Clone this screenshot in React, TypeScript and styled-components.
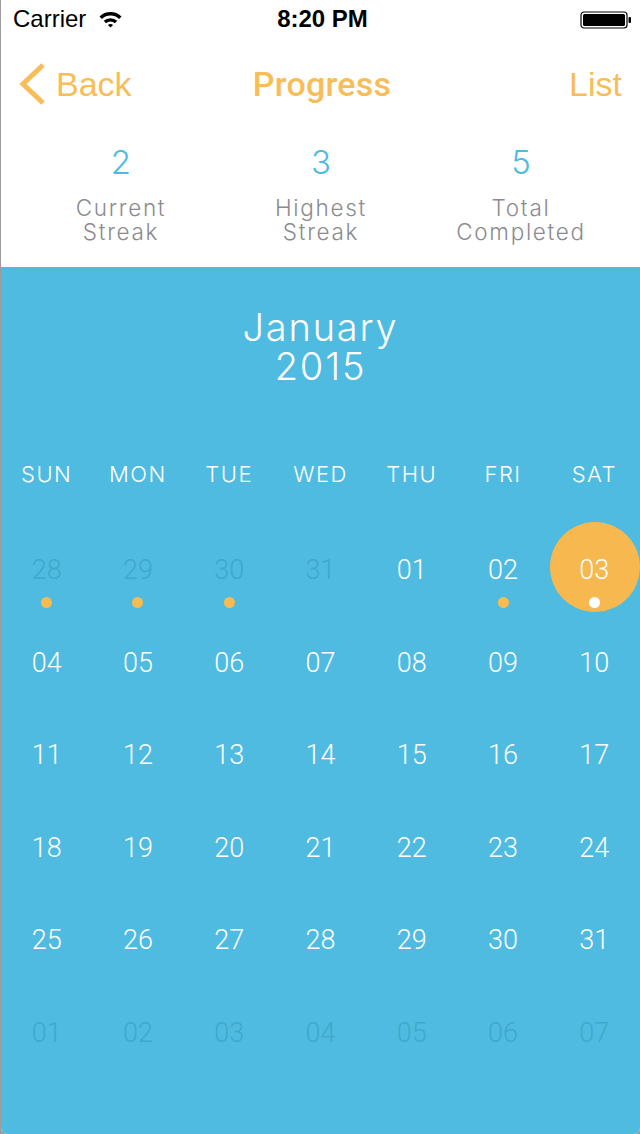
import React from "react";
import styled, { createGlobalStyle } from "styled-components";

const GlobalStyle = createGlobalStyle`
  html, body {
    margin: 0;
    padding: 0;
    background: #9c9c9c;
  }
  #root {
    min-height: 1134px;
  }
`;

const ORANGE = "#f8bd59";
const BLUE = "#4fbbe0";

const Phone = styled.div`
  margin-left: 1px;
  min-height: 1134px;
  background: #ffffff;
  display: flex;
  flex-direction: column;
  border-bottom-left-radius: 6px;
  border-bottom-right-radius: 6px;
  overflow: hidden;
`;

const StatusBar = styled.div`
  height: 40px;
  display: grid;
  grid-template-columns: 1fr auto 1fr;
  align-items: center;
  padding: 0 8px 0 12px;
  font-family: "Liberation Sans", Arial, sans-serif;
  font-size: 24px;
  color: #000;
`;

const StatusLeft = styled.div`
  display: flex;
  align-items: center;
  gap: 12px;
  margin-top: -2px;
`;

const StatusTime = styled.div`
  font-weight: bold;
  margin-top: -2px;
`;

const StatusRight = styled.div`
  display: flex;
  justify-content: flex-end;
  align-items: center;
`;

const NavBar = styled.div`
  height: 88px;
  display: grid;
  grid-template-columns: 1fr auto 1fr;
  align-items: center;
  padding: 0 18px 0 17px;
  font-family: "Liberation Sans", Arial, sans-serif;
  font-size: 34px;
  color: ${ORANGE};
`;

const BackButton = styled.div`
  display: flex;
  align-items: center;
  gap: 10px;
`;

const NavTitle = styled.div`
  font-family: Roboto, "Liberation Sans", sans-serif;
  font-weight: 500;
  font-size: 34px;
  letter-spacing: 0.2px;
  margin-left: 4px;
`;

const NavRight = styled.div`
  text-align: right;
`;

const Stats = styled.div`
  height: 139px;
  box-sizing: border-box;
  display: grid;
  grid-template-columns: repeat(3, 200px);
  padding: 16px 0 0 20px;
  font-family: Inter, "Noto Sans", sans-serif;
  font-weight: 300;
`;

const Stat = styled.div`
  display: flex;
  flex-direction: column;
  align-items: center;
  text-align: center;
`;

const StatValue = styled.div`
  font-size: 33px;
  line-height: 36px;
  color: ${BLUE};
  margin-bottom: 16px;
`;

const StatLabel = styled.div`
  font-size: 22.5px;
  color: #8b8b8f;
  letter-spacing: 1.7px;
`;

const LabelLine = styled.div`
  height: 24px;
  line-height: 24px;
`;

const Calendar = styled.div`
  flex: 1;
  background: ${BLUE};
  display: flex;
  flex-direction: column;
  padding-top: 41px;
  color: #ffffff;
`;

const MonthTitle = styled.div`
  font-family: Inter, "Noto Sans", sans-serif;
  font-weight: 300;
  font-size: 38px;
  line-height: 39px;
  letter-spacing: 1.8px;
  text-align: center;
  margin-bottom: 68px;
`;

const TitleLine = styled.div`
  height: 39px;
`;

const WeekRow = styled.div`
  display: grid;
  grid-template-columns: repeat(7, 1fr);
  height: 40px;
  align-items: center;
  margin-bottom: 30px;
`;

const WeekDay = styled.div`
  text-align: center;
  font-family: Inter, "Noto Sans", sans-serif;
  font-weight: 300;
  font-size: 22px;
  letter-spacing: 1.5px;
`;

const DaysGrid = styled.div`
  display: grid;
  grid-template-columns: repeat(7, 1fr);
  grid-auto-rows: 92.6px;
`;

const DayCell = styled.div<{ $dim?: boolean; $today?: boolean }>`
  position: relative;
  display: flex;
  flex-direction: column;
  align-items: center;
  padding-top: 32px;
  box-sizing: border-box;
  font-family: Roboto, "Liberation Sans", Arial, sans-serif;
  font-weight: 300;
  font-size: 27px;
  color: ${(p) => (p.$dim ? "#40a8cc" : "#ffffff")};

  &::before {
    content: "";
    display: ${(p) => (p.$today ? "block" : "none")};
    position: absolute;
    top: -2px;
    left: 50%;
    width: 90px;
    height: 90px;
    margin-left: -44px;
    border-radius: 50%;
    background: #f7b84f;
  }
`;

const DayNumber = styled.span`
  position: relative;
  line-height: 28px;
`;

const Dot = styled.span<{ $color: string }>`
  position: relative;
  width: 11px;
  height: 11px;
  border-radius: 50%;
  margin-top: 13px;
  background: ${(p) => p.$color};
`;

const WifiIcon = () => (
  <svg width="25" height="18" viewBox="0 0 24 18">
    <path d="M1 6.5 A16 16 0 0 1 23 6.5 L20.6 9 A12.6 12.6 0 0 0 3.4 9 Z" fill="#000" />
    <path d="M5.2 10.8 A10 10 0 0 1 18.8 10.8 L16.4 13.2 A6.6 6.6 0 0 0 7.6 13.2 Z" fill="#000" />
    <path d="M9.4 15 A4 4 0 0 1 14.6 15 L12 17.6 Z" fill="#000" />
  </svg>
);

const BatteryIcon = () => (
  <svg width="52" height="18" viewBox="0 0 52 18">
    <rect x="1" y="1" width="46" height="16" rx="3" fill="none" stroke="#000" strokeWidth="1.2" />
    <rect x="3" y="3" width="42" height="12" rx="1.5" fill="#000" />
    <rect x="48.5" y="6" width="2.5" height="6" rx="1" fill="#000" />
  </svg>
);

const Chevron = () => (
  <svg width="28" height="44" viewBox="0 0 28 44">
    <path d="M25 3 L5 22 L25 41" fill="none" stroke={ORANGE} strokeWidth="5" />
  </svg>
);

type Day = { n: string; dim?: boolean; today?: boolean; dot?: boolean };

const days: Day[] = [
  { n: "28", dim: true, dot: true },
  { n: "29", dim: true, dot: true },
  { n: "30", dim: true, dot: true },
  { n: "31", dim: true },
  { n: "01" },
  { n: "02", dot: true },
  { n: "03", today: true, dot: true },
  ...Array.from({ length: 28 }, (_, i) => ({ n: String(i + 4).padStart(2, "0") })),
  ...Array.from({ length: 7 }, (_, i) => ({ n: String(i + 1).padStart(2, "0"), dim: true })),
];

const weekDays = ["SUN", "MON", "TUE", "WED", "THU", "FRI", "SAT"];

const stats = [
  { value: "2", label: ["Current", "Streak"] },
  { value: "3", label: ["Highest", "Streak"] },
  { value: "5", label: ["Total", "Completed"] },
];

export default function App() {
  return (
    <>
      <GlobalStyle />
      <Phone>
        <StatusBar>
          <StatusLeft>
            Carrier
            <WifiIcon />
          </StatusLeft>
          <StatusTime>8:20 PM</StatusTime>
          <StatusRight>
            <BatteryIcon />
          </StatusRight>
        </StatusBar>
        <NavBar>
          <BackButton>
            <Chevron />
            Back
          </BackButton>
          <NavTitle>Progress</NavTitle>
          <NavRight>List</NavRight>
        </NavBar>
        <Stats>
          {stats.map((s) => (
            <Stat key={s.value}>
              <StatValue>{s.value}</StatValue>
              <StatLabel>
                <LabelLine>{s.label[0]}</LabelLine>
                <LabelLine>{s.label[1]}</LabelLine>
              </StatLabel>
            </Stat>
          ))}
        </Stats>
        <Calendar>
          <MonthTitle>
            <TitleLine>January</TitleLine>
            <TitleLine>2015</TitleLine>
          </MonthTitle>
          <WeekRow>
            {weekDays.map((d) => (
              <WeekDay key={d}>{d}</WeekDay>
            ))}
          </WeekRow>
          <DaysGrid>
            {days.map((d, i) => (
              <DayCell key={i} $dim={d.dim} $today={d.today}>
                <DayNumber>{d.n}</DayNumber>
                {d.dot && <Dot $color={d.today ? "#ffffff" : "#f8bb52"} />}
              </DayCell>
            ))}
          </DaysGrid>
        </Calendar>
      </Phone>
    </>
  );
}
